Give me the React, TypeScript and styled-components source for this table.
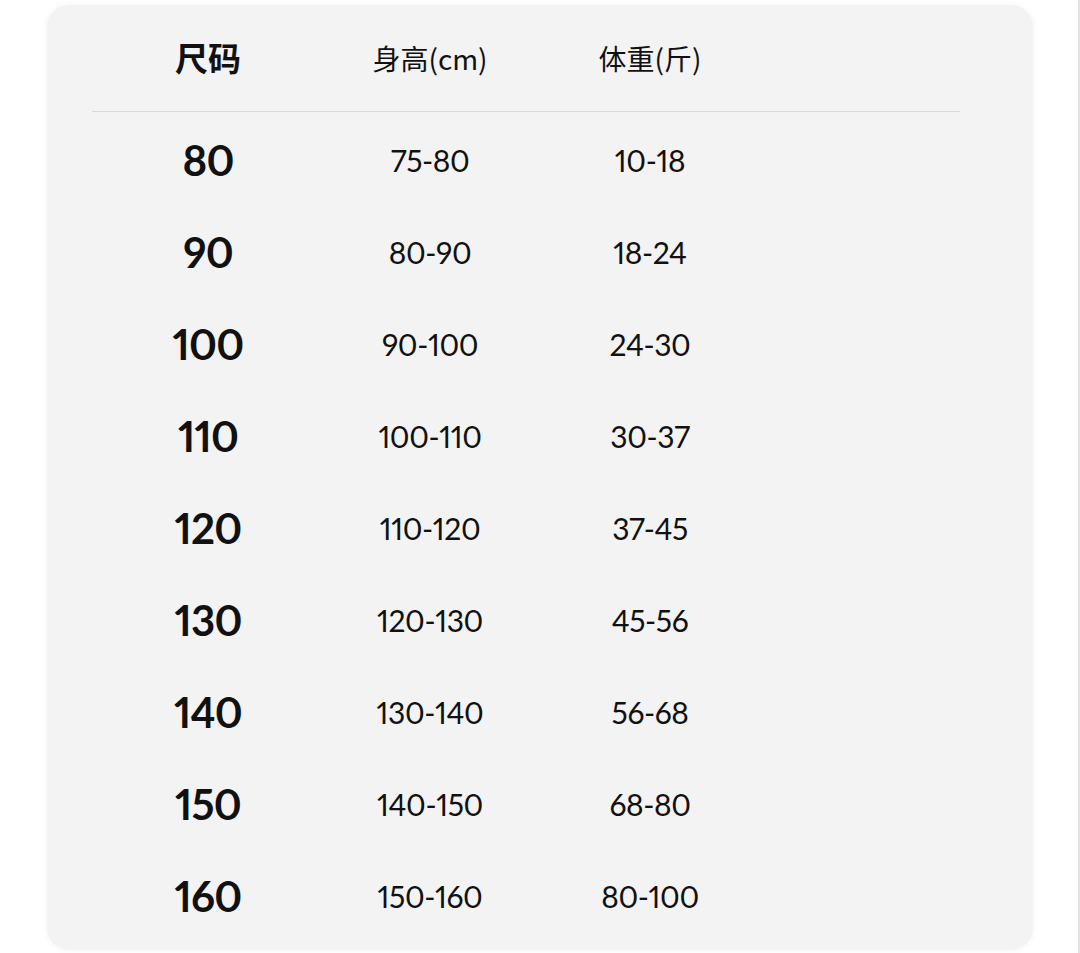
import React from 'react'
import styled, { createGlobalStyle } from 'styled-components'

const GlobalStyle = createGlobalStyle`
  html, body {
    margin: 0;
    padding: 0;
    background: #ffffff;
  }
  body {
    font-family: Lato, 'Noto Sans CJK SC', sans-serif;
    color: #111111;
  }
`

const Page = styled.div`
  width: 1080px;
  height: 953px;
  padding: 5px 0 0 47px;
  box-sizing: border-box;
  overflow: hidden;
  border-right: 2px solid #e2e2e2;
`

const Card = styled.div`
  width: 986px;
  height: 945px;
  background: #f3f3f3;
  border-radius: 22px;
  box-shadow: 0 0 6px rgba(0, 0, 0, 0.05);
  padding: 0 73px 7px 45px;
  box-sizing: border-box;
`

const Grid = styled.div`
  display: grid;
  grid-template-columns: 232px 212px 228px 1fr;
  align-items: center;
  justify-items: center;
`

const HeaderRow = styled(Grid)`
  height: 107px;
  padding-bottom: 1px;
  box-sizing: border-box;
  border-bottom: 1px solid #d9d9d9;
`

const Body = styled.div`
  padding-top: 2px;
`

const Row = styled(Grid)`
  height: 92px;
`

const HeadCell = styled.div<{ $bold?: boolean }>`
  font-family: 'Noto Sans CJK SC', 'Noto Sans', sans-serif;
  font-size: ${p => (p.$bold ? '33px' : '28px')};
  font-weight: ${p => (p.$bold ? 700 : 400)};
  line-height: 1;
`

const Cell = styled.div<{ $bold?: boolean }>`
  font-family: Lato, 'Noto Sans', sans-serif;
  font-size: ${p => (p.$bold ? '42px' : '30px')};
  font-weight: ${p => (p.$bold ? 700 : 400)};
  font-variant-numeric: proportional-nums;
  line-height: 1;
  letter-spacing: ${p => (p.$bold ? '-0.8px' : '-0.4px')};
`

const rows: [string, string, string][] = [
  ['80', '75-80', '10-18'],
  ['90', '80-90', '18-24'],
  ['100', '90-100', '24-30'],
  ['110', '100-110', '30-37'],
  ['120', '110-120', '37-45'],
  ['130', '120-130', '45-56'],
  ['140', '130-140', '56-68'],
  ['150', '140-150', '68-80'],
  ['160', '150-160', '80-100'],
]

export default function App() {
  return (
    <>
      <GlobalStyle />
      <Page>
        <Card>
          <HeaderRow>
            <HeadCell $bold>尺码</HeadCell>
            <HeadCell>身高(cm)</HeadCell>
            <HeadCell>体重(斤)</HeadCell>
            <span />
          </HeaderRow>
          <Body>
            {rows.map(([size, height, weight]) => (
              <Row key={size}>
                <Cell $bold>{size}</Cell>
                <Cell>{height}</Cell>
                <Cell>{weight}</Cell>
                <span />
              </Row>
            ))}
          </Body>
        </Card>
      </Page>
    </>
  )
}
